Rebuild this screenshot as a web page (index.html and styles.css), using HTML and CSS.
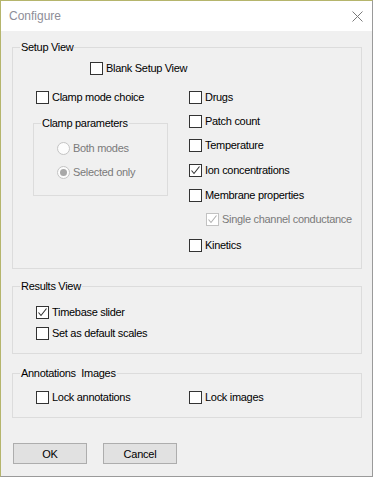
FILE: index.html
```html
<!DOCTYPE html>
<html lang="en">
<head>
    <meta charset="UTF-8">
    <title>Configure</title>
    <link rel="stylesheet" href="styles.css">
</head>
<body>
    <div class="window">
        <!-- title bar -->
        <div class="titlebar">
            <span class="title">Configure</span>
            <svg class="close" width="11" height="11" viewBox="0 0 11 11">
                <path d="M0.5 0.5 L10.5 10.5 M10.5 0.5 L0.5 10.5" stroke="#7a7a7a" stroke-width="1" fill="none"/>
            </svg>
        </div>

        <div class="client">
            <!-- Setup View -->
            <fieldset class="group setup">
                <legend>Setup View</legend>
                <div class="check blank"><span class="box"></span>Blank Setup View</div>
                <div class="setup-cols">
                    <div class="col-left">
                        <div class="check"><span class="box"></span>Clamp mode choice</div>
                        <fieldset class="group clamp-params">
                            <legend>Clamp parameters</legend>
                            <div class="radio first"><span class="dot"></span>Both modes</div>
                            <div class="radio selected"><span class="dot"></span>Selected only</div>
                        </fieldset>
                    </div>
                    <div class="col-right">
                        <div class="check"><span class="box"></span>Drugs</div>
                        <div class="check"><span class="box"></span>Patch count</div>
                        <div class="check"><span class="box"></span>Temperature</div>
                        <div class="check"><span class="box checked"><svg width="11" height="11" viewBox="0 0 11 11"><polyline points="1.5,5.5 4,8.5 9.5,1.5" stroke="#333" stroke-width="1.1" fill="none"/></svg></span>Ion concentrations</div>
                        <div class="check"><span class="box"></span>Membrane properties</div>
                        <div class="check sub disabled"><span class="box checked"><svg width="11" height="11" viewBox="0 0 11 11"><polyline points="1.5,5.5 4,8.5 9.5,1.5" stroke="#b0b0b0" stroke-width="1.1" fill="none"/></svg></span>Single channel conductance</div>
                        <div class="check"><span class="box"></span>Kinetics</div>
                    </div>
                </div>
            </fieldset>

            <!-- Results View -->
            <fieldset class="group results">
                <legend>Results View</legend>
                <div class="check first"><span class="box checked"><svg width="11" height="11" viewBox="0 0 11 11"><polyline points="1.5,5.5 4,8.5 9.5,1.5" stroke="#333" stroke-width="1.1" fill="none"/></svg></span>Timebase slider</div>
                <div class="check second"><span class="box"></span>Set as default scales</div>
            </fieldset>

            <!-- Annotations / Images -->
            <fieldset class="group annotations">
                <legend>Annotations&nbsp; Images</legend>
                <div class="lock-row">
                    <div class="check lock-ann"><span class="box"></span>Lock annotations</div>
                    <div class="check"><span class="box"></span>Lock images</div>
                </div>
            </fieldset>

            <div class="buttons">
                <button class="btn">OK</button>
                <button class="btn">Cancel</button>
            </div>
        </div>
    </div>
</body>
</html>
```

FILE: styles.css
```css
/* general */
body {
    margin: 0;
    font-family: "Liberation Sans", Arial, sans-serif;
    font-size: 11px;
    letter-spacing: -0.3px;
    color: #000;
    background: #f0f0f0;
}

.window {
    width: 373px;
    height: 477px;
    box-sizing: border-box;
    border: 1px solid #9a9a9a;
    border-top-color: #b5b56c;
    border-left-color: #b5b56c;
    background: #f0f0f0;
    overflow: hidden;
}

/* title bar */
.titlebar {
    height: 30px;
    background: #fff;
    display: flex;
    justify-content: space-between;
    align-items: center;
    padding: 0 9px 0 8px;
}
.title {
    font-size: 12px;
    color: #8e8e98;
    letter-spacing: 0;
}
.close {
    display: block;
}

/* group boxes */
.group {
    margin: 0;
    padding: 0;
    border: 1px solid #dcdcdc;
    box-sizing: border-box;
    min-width: 0;
}
.group legend {
    margin-left: 7px;
    padding: 0 1px;
    height: 15px;
    line-height: 15px;
}

.setup {
    margin: 9px 0 0 11px;
    width: 350px;
    height: 229px;
}
.results {
    margin: 10px 0 0 11px;
    width: 350px;
    height: 75px;
}
.annotations {
    margin: 12px 0 0 11px;
    width: 350px;
    height: 52px;
}

/* checkboxes */
.check {
    display: flex;
    align-items: center;
    height: 13px;
    line-height: 13px;
    white-space: nowrap;
}
.box {
    flex: none;
    width: 13px;
    height: 13px;
    box-sizing: border-box;
    border: 1px solid #333;
    background: #fff;
    margin-right: 3px;
    display: flex;
    align-items: center;
    justify-content: center;
}
.box svg {
    display: block;
}
.disabled {
    color: #7a7a7a;
}
.disabled .box {
    border-color: #c2c2c2;
}

.blank {
    margin: 7px 0 0 77px;
}

.setup-cols {
    display: grid;
    grid-template-columns: 156px 1fr;
    margin-top: 16px;
    padding-left: 20px;
}
.col-left .check {
    margin-left: 3px;
}
.col-right {
    display: grid;
    grid-template-rows: 24px 24px 25px 25px 24px 26px 13px;
}
.sub {
    margin-left: 17px;
}

/* clamp parameters */
.clamp-params {
    width: 135px;
    height: 80px;
    margin-top: 12px;
}
.radio {
    display: flex;
    align-items: center;
    height: 13px;
    line-height: 13px;
    margin: 11px 0 0 23px;
    color: #7a7a7a;
}
.dot {
    flex: none;
    width: 13px;
    height: 13px;
    box-sizing: border-box;
    border: 1px solid #c4c4c4;
    border-radius: 50%;
    background: #fcfcfc;
    margin-right: 3px;
    display: flex;
    align-items: center;
    justify-content: center;
}
.selected .dot::after {
    content: "";
    width: 7px;
    height: 7px;
    border-radius: 50%;
    background: #a8a8a8;
}

/* results view */
.results .check {
    margin-left: 23px;
}
.results .first {
    margin-top: 12px;
}
.results .second {
    margin-top: 8px;
}

/* annotations */
.lock-row {
    display: flex;
    margin-top: 10px;
    padding-left: 23px;
}
.lock-ann {
    width: 153px;
}

/* buttons */
.buttons {
    display: flex;
    gap: 16px;
    margin: 25px 0 0 12px;
}
.btn {
    width: 74px;
    height: 21px;
    padding: 0;
    border: 1px solid #adadad;
    background: #e1e1e1;
    font-family: "Liberation Sans", Arial, sans-serif;
    font-size: 11px;
    letter-spacing: -0.2px;
    color: #000;
}
```
